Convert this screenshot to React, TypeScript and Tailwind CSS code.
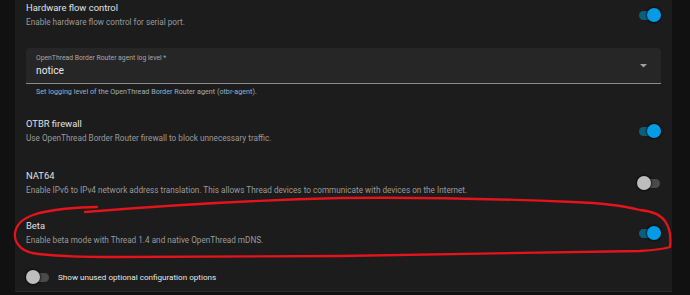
import React from "react";

function Toggle({ on }: { on: boolean }) {
  return (
    <div className="relative w-[24px] h-[14px] shrink-0">
      <div
        className={
          "absolute top-[3px] h-[9px] w-[20px] rounded-full " +
          (on ? "left-[2px] bg-[#0b5f7e]" : "left-[3px] bg-[#4a4a4a]")
        }
      />
      <div
        className={
          "absolute top-0 w-[14px] h-[14px] rounded-full shadow-[0_0_2px_1px_rgba(0,0,0,0.6)] " +
          (on ? "right-0 bg-[#039be5]" : "left-0 bg-[#bdbdbd]")
        }
      />
    </div>
  );
}

function Row({
  title,
  desc,
  on,
  className,
}: {
  title: string;
  desc: string;
  on: boolean;
  className?: string;
}) {
  return (
    <div className={"flex items-center justify-between " + (className || "")}>
      <div className="flex flex-col">
        <div className="text-[9.4px] leading-[14px] text-[#e1e1e1]">{title}</div>
        <div className="text-[8.2px] leading-[12px] text-[#9a9a9a] mt-[1px]">{desc}</div>
      </div>
      <Toggle on={on} />
    </div>
  );
}

export default function App() {
  return (
    <div
      className="relative w-[690px] h-[295px] overflow-hidden bg-[#111111] flex"
      style={{ fontFamily: "Roboto, 'Noto Sans', sans-serif" }}
    >
      <div className="ml-[15px] w-[657px] h-[292px] bg-[#1c1c1c] border-b border-[#2b2b2b] flex flex-col px-[11px]">
        <Row
          className="mt-[1px]"
          title="Hardware flow control"
          desc="Enable hardware flow control for serial port."
          on={true}
        />
        <div className="mt-[20px] h-[36px] bg-[#262626] rounded-t-[4px] border-b border-[#8a8a8a] flex items-center justify-between pl-[10px] pr-[14px]">
          <div className="flex flex-col">
            <div className="text-[6.8px] leading-[9px] text-[#a8a8a8]">
              OpenThread Border Router agent log level *
            </div>
            <div className="text-[10.2px] leading-[14px] text-[#e6e6e6] mt-[1px]">notice</div>
          </div>
          <svg width="7" height="4" viewBox="0 0 7 4">
            <path d="M0 0 L7 0 L3.5 3.5 Z" fill="#a0a0a0" />
          </svg>
        </div>
        <div className="pl-[10px] mt-[3px] text-[7.2px] leading-[10px] text-[#9ab0c4]">
          Set logging level of the OpenThread Border Router agent (otbr-agent).
        </div>
        <Row
          className="mt-[20px]"
          title="OTBR firewall"
          desc="Use OpenThread Border Router firewall to block unnecessary traffic."
          on={true}
        />
        <Row
          className="mt-[25px]"
          title="NAT64"
          desc="Enable IPv6 to IPv4 network address translation. This allows Thread devices to communicate with devices on the Internet."
          on={false}
        />
        <Row
          className="mt-[23px]"
          title="Beta"
          desc="Enable beta mode with Thread 1.4 and native OpenThread mDNS."
          on={true}
        />
        <div className="mt-[24px] flex items-center gap-[8px]">
          <Toggle on={false} />
          <div className="text-[8.1px] leading-[12px] text-[#e6e6e6]">
            Show unused optional configuration options
          </div>
        </div>
      </div>
      <svg
        className="absolute inset-0 pointer-events-none"
        width="690"
        height="295"
        viewBox="0 0 690 295"
      >
        <path
          d="M97,207 C80,207 50,209 33,215 C22,219 16,226 15,233 C14,242 20,250 32,253 C50,256 80,257 120,257 C200,257 280,256 340,256 C450,255 560,253 640,251 C655,250 664,249 670,247 C671,238 670,228 665,221 C660,214 650,211 640,210 C620,205 600,203 573,202 C500,199 420,197 340,198 C260,200 170,205 85,212"
          fill="none"
          stroke="#e3141b"
          strokeWidth="2.3"
          strokeLinecap="round"
          strokeLinejoin="round"
        />
      </svg>
    </div>
  );
}
